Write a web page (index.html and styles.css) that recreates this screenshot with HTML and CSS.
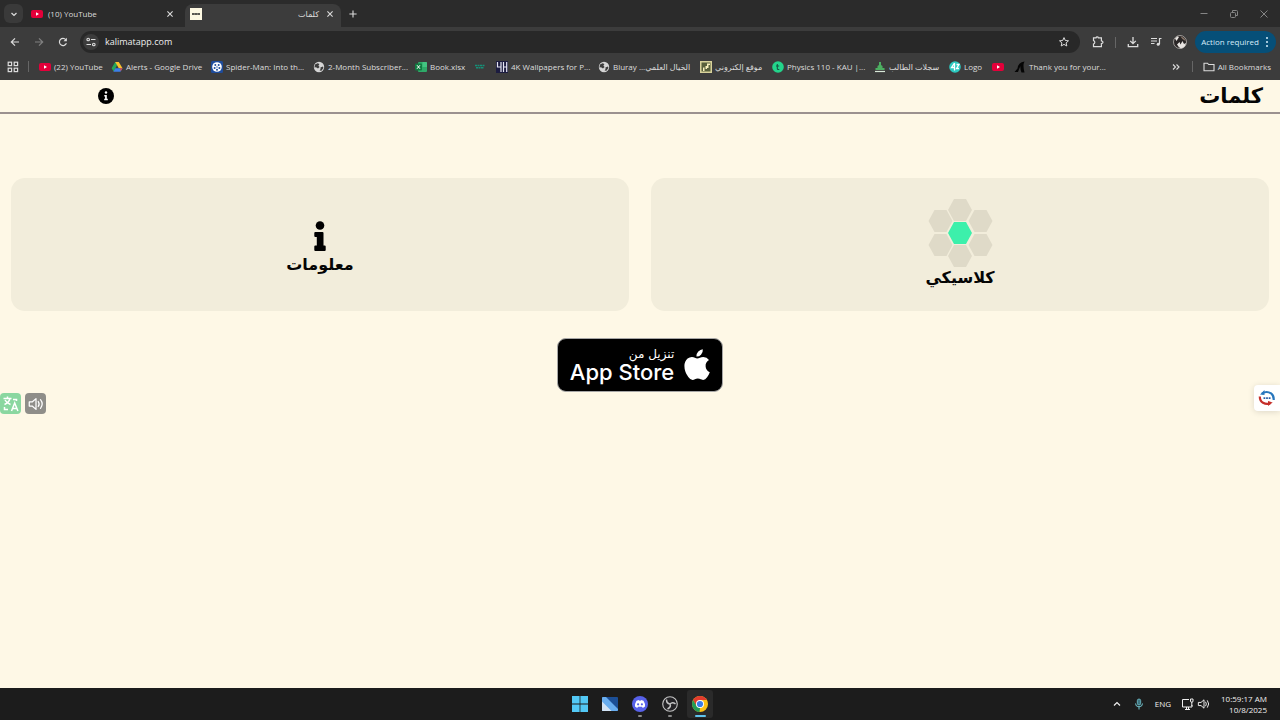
FILE: index.html
```html
<!DOCTYPE html>
<html lang="en">
<head>
<meta charset="utf-8">
<title>كلمات</title>
<link rel="stylesheet" href="styles.css">
</head>
<body>
<svg class="defs" aria-hidden="true">
  <defs>
    <symbol id="yt" viewBox="0 0 12 12"><rect x="0" y="2" width="12" height="8" rx="2" fill="#e4003a"/><path d="M5 4.2 8 6 5 7.8z" fill="#fff"/></symbol>
    <symbol id="globe" viewBox="0 0 12 12"><circle cx="6" cy="6" r="5.2" fill="#d5d5d5"/><path d="M2 3.6 4.6 2.2 6.4 3 5.4 4.8 6.6 6 5 7.4 3 6.2 1.4 6.4zM7.4 6.6 10 5.6 10.4 7 8.4 9.8 6.6 9.4 7.6 8z" fill="#3c3c3c"/></symbol>
    <symbol id="x" viewBox="0 0 12 12"><path d="M3.4 3.4 8.6 8.6M8.6 3.4 3.4 8.6" fill="none" stroke="currentColor" stroke-width="1.1"/></symbol>
    <symbol id="speaker" viewBox="0 0 16 16"><path d="M2 6.2h2.6L8 3.2v9.6L4.600 9.800H2zM10 5.800q1.600 2.200 0 4.400M12 4.200q3 3.800 0 7.600" fill="none" stroke="currentColor" stroke-width="1.100" stroke-linejoin="round" stroke-linecap="round"/></symbol>
  </defs>
</svg>

<header class="browser">
  <div class="tabstrip">
    <button class="tab-search" aria-label="Search tabs"><svg viewBox="0 0 12 12" class="i12"><path d="M3.500 5 6 7.400 8.500 5" fill="none" stroke="currentColor" stroke-width="1.300"/></svg></button>
    <div class="tab">
      <svg class="i12"><use href="#yt"/></svg><span class="tab-title">(10) YouTube</span>
      <button class="plain" aria-label="Close tab"><svg class="i12"><use href="#x"/></svg></button>
    </div>
    <div class="tab active">
      <svg class="i12" viewBox="0 0 12 12"><rect width="12" height="12" fill="#fdf8e2"/><path d="M2 6h8" stroke="#222" stroke-width="1.500" stroke-dasharray="2.600 .2"/></svg>
      <span class="tab-title rtl">كلمات</span>
      <button class="plain" aria-label="Close tab"><svg class="i12"><use href="#x"/></svg></button>
    </div>
    <button class="plain new-tab" aria-label="New tab"><svg class="i12" viewBox="0 0 12 12"><path d="M6 2.400v7.200M2.400 6h7.200" stroke="currentColor" stroke-width="1.100"/></svg></button>
    <div class="window-buttons">
      <button class="plain" aria-label="Minimize"><svg class="i12" viewBox="0 0 12 12"><path d="M2.500 5.500h7" stroke="currentColor"/></svg></button>
      <button class="plain" aria-label="Restore"><svg class="i12" viewBox="0 0 12 12"><g fill="none" stroke="currentColor"><rect x="2.500" y="4.500" width="5" height="5" rx="1"/><path d="M4.500 4V2.500h4q1 0 1 1v4H8"/></g></svg></button>
      <button class="plain" aria-label="Close"><svg class="i12" viewBox="0 0 12 12"><path d="M2.500 2.500l7 7M9.500 2.500l-7 7" stroke="currentColor"/></svg></button>
    </div>
  </div>

  <div class="toolbar">
    <button class="plain" aria-label="Back"><svg class="i12" viewBox="0 0 12 12"><path d="M10 6H2.500M6 2.300 2.300 6 6 9.700" fill="none" stroke="currentColor" stroke-width="1.200"/></svg></button>
    <button class="plain dim" aria-label="Forward"><svg class="i12" viewBox="0 0 12 12"><path d="M2 6h7.500M6 2.300 9.700 6 6 9.700" fill="none" stroke="currentColor" stroke-width="1.200"/></svg></button>
    <button class="plain" aria-label="Reload"><svg class="i12" viewBox="0 0 12 12"><path d="M9.400 7.200A3.600 3.600 0 1 1 8.800 3.600" fill="none" stroke="currentColor" stroke-width="1.200"/><path d="M9.900 1.800v3.400H6.500z" fill="currentColor"/></svg></button>
    <div class="omnibox">
      <button class="site-info" aria-label="Site information"><svg class="i12" viewBox="0 0 12 12"><g fill="none" stroke="currentColor" stroke-width="1.100"><circle cx="3.200" cy="3.500" r="1.300"/><path d="M6 3.500h4.500M1.500 8.500H6"/><circle cx="8.800" cy="8.500" r="1.300"/></g></svg></button>
      <input class="url" type="text" aria-label="Address" value="kalimatapp.com">
      <button class="plain" aria-label="Bookmark this page"><svg class="i12" viewBox="0 0 12 12"><path d="M6 1.600 7.300 4.500l3.200.3L8.100 6.900l.7 3.100L6 8.400 3.200 10l.7-3.100L1.500 4.800l3.200-.3z" fill="none" stroke="currentColor"/></svg></button>
    </div>
    <div class="tools">
      <button class="plain" aria-label="Extensions"><svg class="i12" viewBox="0 0 12 12"><path d="M1.500 1.800h2.500q.2-1 1.200-1t1.200 1h3v3q1.600.2 1.600 1.400T9.400 7.600v3H1.500V8q1.300-.3 1.300-1.700T1.500 4.600z" fill="none" stroke="currentColor" stroke-width="1.200"/></svg></button>
      <span class="sep"></span>
      <button class="plain" aria-label="Downloads"><svg class="i12" viewBox="0 0 12 12"><path d="M6 1v6.500M3.200 4.900 6 7.700l2.800-2.800M1.300 8v2.700h9.400V8" fill="none" stroke="currentColor" stroke-width="1.300"/></svg></button>
      <button class="plain" aria-label="Media controls"><svg class="i12" viewBox="0 0 12 12"><path d="M1 2.500h6M1 5h6M1 7.500h3.500M11.500 2.500h-2v5.500" fill="none" stroke="currentColor" stroke-width="1.200"/><circle cx="8.200" cy="8.200" r="1.500" fill="currentColor"/></svg></button>
      <button class="plain" aria-label="Profile"><svg class="i14" viewBox="0 0 14 14"><circle cx="7" cy="7" r="6.500" fill="#2a2626" stroke="#bdb8b4" stroke-width=".8"/><path d="M2 3.500 4.500 1.200 6 2 3.500 6zM4 9.500 6.500 7l1 2.500L9.500 6l1.500 3 2-1q-.5 4.500-5 5.500-2.500-1-4-4z" fill="#e8e5e2"/><path d="M7.500 1.500q4 .5 5 4.500L9.500 4z" fill="#8d7a6c"/></svg></button>
    </div>
    <button class="action">Action required <svg class="dots" viewBox="0 0 4 12"><g fill="currentColor"><circle cx="2" cy="2" r="1"/><circle cx="2" cy="6" r="1"/><circle cx="2" cy="10" r="1"/></g></svg></button>
  </div>

  <nav class="bookmarks" aria-label="Bookmarks">
    <button class="plain" aria-label="Apps"><svg class="i12" viewBox="0 0 12 12"><g fill="none" stroke="currentColor" stroke-width="1.200"><rect x="1.200" y="1.200" width="3.400" height="3.400"/><rect x="7.200" y="1.200" width="3.400" height="3.400"/><rect x="1.200" y="7.200" width="3.400" height="3.400"/><rect x="7.200" y="7.200" width="3.400" height="3.400"/></g></svg></button>
    <span class="sep first"></span>
    <a href="#" class="bm"><svg class="i12"><use href="#yt"/></svg><span class="l47">(22) YouTube</span></a>
    <a href="#" class="bm"><svg class="i12" viewBox="0 0 12 12"><path d="M4.200 1h3.600L6 4.200 2.700 10.500.6 7.200z" fill="#25a65a"/><path d="M4.200 1h3.600l3.700 6.300H7.800z" fill="#fbc02d"/><path d="M4.300 7.300h7.200l-2 3.400H2.400z" fill="#3c7fe8"/><path d="M9 7.300h2.500l-1.800 3z" fill="#e5483a"/></svg><span class="l75">Alerts - Google Drive</span></a>
    <a href="#" class="bm"><svg class="i12" viewBox="0 0 12 12"><rect width="12" height="12" rx="1.500" fill="#1e4c9c"/><circle cx="6" cy="6" r="4.800" fill="#fff"/><circle cx="4.300" cy="4" r="1" fill="#1e4c9c"/><circle cx="7.700" cy="4" r="1" fill="#1e4c9c"/><circle cx="3.600" cy="7" r="1" fill="#1e4c9c"/><circle cx="8.400" cy="7" r="1" fill="#1e4c9c"/><circle cx="6" cy="8.700" r="1" fill="#1e4c9c"/><circle cx="6" cy="6" r=".7" fill="#1e4c9c"/></svg><span class="l77">Spider-Man: Into th...</span></a>
    <a href="#" class="bm"><svg class="i12"><use href="#globe"/></svg><span class="l77">2-Month Subscriber...</span></a>
    <a href="#" class="bm"><svg class="i12" viewBox="0 0 12 12"><rect x="3" y="1" width="9" height="10" rx="1" fill="#2faa69"/><path d="M7.500 1H11q1 0 1 1v4H7.500z" fill="#43c481"/><rect y="2.500" width="7" height="7" rx="1" fill="#107c41"/><path d="M2 4.200 5 7.800M5 4.200 2 7.800" stroke="#fff"/></svg><span class="l34">Book.xlsx</span></a>
    <a href="#" class="bm" aria-label="Bookmark"><svg class="i12" viewBox="0 0 12 12"><path d="M1 4.500h10M2 6.800h8" stroke="#159077" stroke-width="1.500" stroke-dasharray="2 .5"/></svg></a>
    <a href="#" class="bm"><svg class="i12" viewBox="0 0 12 12"><rect width="12" height="12" fill="#1c1c40"/><path d="M1.500 1v5h3.500M5 1v10M7.500 1v10M10.700 1v10M7.500 6h3" fill="none" stroke="#e4e4f2" stroke-width="1.200"/></svg><span class="l77">4K Wallpapers for P...</span></a>
    <a href="#" class="bm"><svg class="i12"><use href="#globe"/></svg><span class="l77" dir="ltr">Bluray ...الخيال العلمي</span></a>
    <a href="#" class="bm"><svg class="i12" viewBox="0 0 12 12"><rect width="12" height="12" fill="#d8d29a"/><path d="M1.500 1.500h9v9h-9z" fill="#59603b"/><path d="M3 10V6.500h1.500V10zM5.500 8V5H7v3zM7 4.500V2.500h3V4H8.500v3H7z" fill="#f7efbb"/></svg><span class="l47">موقع إلكتروني</span></a>
    <a href="#" class="bm"><svg class="i12" viewBox="0 0 12 12"><circle cx="6" cy="6" r="5.800" fill="#23d48b"/><path d="M5.300 3v4.500q0 1 1 1h1M4 5h3.200" fill="none" stroke="#145744" stroke-width="1.100"/></svg><span class="l77">Physics 110 - KAU |...</span></a>
    <a href="#" class="bm"><svg class="i12" viewBox="0 0 12 12"><path d="M5 1h2v3l1.500 1v2h2v2h-9V7h2V5L5 4z" fill="#4caf61"/><path d="M1 10.500h10" stroke="#d8e8d8" stroke-width="1.200"/></svg><span class="l50">سجلات الطالب</span></a>
    <a href="#" class="bm"><svg class="i12" viewBox="0 0 12 12"><circle cx="6" cy="6" r="5.800" fill="#2cc9c0"/><path d="M5.500 2 2.500 6.500h3.500M5.500 2v7.500M7.500 3.500h2.500L7.500 7.500H10" fill="none" stroke="#fff" stroke-width="1.300"/></svg><span class="l18">Logo</span></a>
    <a href="#" class="bm" aria-label="YouTube"><svg class="i12"><use href="#yt"/></svg></a>
    <a href="#" class="bm"><svg class="i12" viewBox="0 0 12 12"><path d="M.5 11 3.500 7.500Q4 1.500 10.500.5 8.500 4 10.500 11.500H7.500Q6 8 6.500 5 5 8 4 11z" fill="#050505"/></svg><span class="l75">Thank you for your...</span></a>
    <div class="bm-end">
      <button class="plain" aria-label="More bookmarks"><svg class="i12" viewBox="0 0 12 12"><path d="M3 3.500 5.500 6 3 8.500M6.500 3.500 9 6 6.500 8.500" fill="none" stroke="currentColor" stroke-width="1.100"/></svg></button>
      <span class="sep"></span>
      <a href="#" class="bm"><svg class="i12" viewBox="0 0 12 12"><path d="M1 2.200h3.500l1.200 1.300H11v6.300H1z" fill="none" stroke="currentColor" stroke-width="1.100"/></svg><span>All Bookmarks</span></a>
    </div>
  </nav>
</header>

<main class="site" dir="rtl" lang="ar">
  <header class="site-head">
    <h1 class="brand">كلمات</h1>
    <button class="plain info-btn" aria-label="معلومات"><svg class="i16" viewBox="0 0 16 16"><circle cx="8" cy="8" r="8" fill="#000"/><circle cx="8" cy="4.500" r="1.200" fill="#fff"/><path d="M6.300 7h2.500v3.700h1v1.500H6.200v-1.500h.9V8.400h-.8z" fill="#fff"/></svg></button>
  </header>
  <div class="cards">
    <a href="#" class="card">
      <svg class="hexes" viewBox="0 0 66 66"><defs><path id="hex" d="M-12 0-6-11H6L12 0 6 11H-6z"/></defs>
        <g fill="#dfdac8"><use href="#hex" x="33" y="10"/><use href="#hex" x="13.500" y="21"/><use href="#hex" x="53.500" y="21"/><use href="#hex" x="13.500" y="45"/><use href="#hex" x="53.500" y="45"/><use href="#hex" x="33" y="56"/></g>
        <use href="#hex" x="33" y="33" fill="#3cf0ab"/></svg>
      <span>كلاسيكي</span>
    </a>
    <a href="#" class="card">
      <svg class="big-i" viewBox="0 0 12 30"><circle cx="6" cy="4.500" r="4.300"/><path d="M1.300 11h7.200q1 0 1 1v12.500h1.200q1 0 1 1V29q0 1-1 1H1.300q-1 0-1-1v-3.500q0-1 1-1h1.500v-8.500H1.300q-1 0-1-1v-3q0-1 1-1z"/></svg>
      <span>معلومات</span>
    </a>
  </div>
  <a href="#" class="store">
    <svg class="apple" viewBox="0 0 26 32"><path d="M18.800.3Q19.200 3.300 17 5.700 15 7.800 12.400 7.600 12.200 4.700 14.300 2.500 16.300.5 18.800.3zM13.200 9.500C15 9.500 16.600 8 19.300 8q3.600.1 5.700 3-3.700 2.300-3.400 6.200.2 4 4.200 6-1 2.800-2.700 5-1.700 2.600-4 2.700c-2 0-2.700-1.300-5.300-1.300S10.500 31 8.600 31q-2.400-.1-4.300-2.900Q.4 22.600.4 17 .5 12 3.600 9.500 5.600 8 7.900 8c2.300 0 3.900 1.500 5.300 1.500z"/></svg>
    <span class="store-text"><span class="store-top">تنزيل من</span><span class="store-name" dir="ltr">App Store</span></span>
  </a>
  <div class="float-left" dir="ltr">
    <button class="float green" aria-label="Translate"><svg class="i18" viewBox="0 0 18 18"><g fill="none" stroke="#fff" stroke-width="1.500"><path d="M1.500 3.500h8M5.500 1.500v2M2.500 9.500Q7 7.500 8 3.500M3 5q1.500 3 5.500 4.500M9.500 16l3.200-8 3.200 8M10.600 13.500h4.200M11 4.500h3.500V6M2.500 12v2.500H6"/></g></svg></button>
    <button class="float grey" aria-label="Read aloud"><svg class="i18"><use href="#speaker"/></svg></button>
  </div>
  <button class="float-right" aria-label="Assistant"><svg class="i18" viewBox="0 0 18 18"><g fill="none" stroke-width="2.200"><path d="M4 4.600Q8.500 1.500 13 4.400 16 6.500 15.700 11" stroke="#2877bd"/><path d="M1.800 7.500Q1.800 12 5 13.800q3.500 2 7 .6" stroke="#c52f2a"/></g><path d="M2 5.500 6.500 1v5z" fill="#2877bd"/><path d="M14.700 13.500 10 12v5z" fill="#c52f2a"/><path d="M5.500 9.200h7" stroke="#2b60a8" stroke-width="1.800" stroke-dasharray="1.800 .8"/></svg></button>
</main>

<footer class="taskbar">
  <div></div>
  <div class="apps">
    <button class="task" aria-label="Start"><svg class="i16" viewBox="0 0 16 16"><path d="M0 0h7.600v7.600H0zM8.400 0H16v7.600H8.400zM0 8.400h7.600V16H0zM8.400 8.400H16V16H8.400z" fill="#52c8f5"/></svg></button>
    <button class="task" aria-label="Desktop"><svg class="i16" viewBox="0 0 16 16"><rect y="1" width="16" height="14" rx="1" fill="#1c4f96"/><path d="M0 2q0-1 1-1h3l12 12v1q0 1-1 1H0z" fill="#69aef0"/><path d="M0 5.500 9.500 15H1q-1 0-1-1z" fill="#d3e4f5"/></svg></button>
    <button class="task running" aria-label="Discord"><svg class="i16" viewBox="0 0 16 16"><circle cx="8" cy="8" r="8" fill="#5761e9"/><path d="M4.500 4.700 7 4l.4.700h1.200L9 4l2.500.7q1.900 2.800 1.500 5.800L10.800 12l-.8-1.200H6L5.200 12 3 10.500q-.3-3 1.500-5.800z" fill="#fff"/><circle cx="6.100" cy="8.300" r="1.100" fill="#5761e9"/><circle cx="9.900" cy="8.300" r="1.100" fill="#5761e9"/></svg></button>
    <button class="task running" aria-label="OBS Studio"><svg class="i16" viewBox="0 0 16 16"><circle cx="8" cy="8" r="7.300" fill="#242326" stroke="#c4c4c4" stroke-width="1.100"/><path d="M8 8Q4.500 7.500 4.500 3.500M8 8q2.500-2.500 5.500 0M8 8q1.500 3-2.500 5" fill="none" stroke="#c4c4c4" stroke-width="1.500"/></svg></button>
    <button class="task current" aria-label="Chrome"><svg class="i16" viewBox="0 0 16 16"><circle cx="8" cy="8" r="8" fill="#fbc116"/><path d="M1.100 4A8 8 0 0 1 14.900 4H8L4.500 10z" fill="#e33b2e"/><path d="M1.100 4 4.600 10 8 12 7.500 16A8 8 0 0 1 1.100 4z" fill="#239b56"/><circle cx="8" cy="8" r="4" fill="#fff"/><circle cx="8" cy="8" r="3.100" fill="#3b7de8"/></svg></button>
  </div>
  <div class="tray">
    <button class="plain" aria-label="Hidden icons"><svg class="i12" viewBox="0 0 12 12"><path d="M3 7.500l3-3 3 3" fill="none" stroke="currentColor" stroke-width="1.200"/></svg></button>
    <button class="plain mic" aria-label="Microphone"><svg class="i12" viewBox="0 0 12 12"><rect x="4.300" y="1" width="3.400" height="6" rx="1.700" fill="#3e7480" stroke="#72c4cf" stroke-width=".8"/><path d="M2.500 5.500q0 3.300 3.500 3.300t3.500-3.300M6 9v2.500" fill="none" stroke="#72c4cf"/></svg></button>
    <span class="lang">ENG</span>
    <button class="plain net" aria-label="Network and volume"><svg class="i14" viewBox="0 0 14 14"><path d="M8 2.500H1.500V10H11V8M4 12.500h5M5.500 10v2.500M7.500 10v2.500M9.500 2v2q0 1.200 1.300 1.200T12 4V2zM10.800 5v4" fill="none" stroke="currentColor"/></svg><svg class="i14"><use href="#speaker"/></svg></button>
    <time class="clock">10:59:17 AM<br>10/8/2025</time>
  </div>
</footer>
</body>
</html>
```
FILE: styles.css
```css
* { box-sizing: border-box; }

body {
  margin: 0;
  min-height: 100vh;
  display: flex;
  flex-direction: column;
  font-family: "Open Sans", "DejaVu Sans", sans-serif;
  font-size: 8px;
  line-height: 12px;
  color: #dcdcdc;
  background: #fef8e6;
}

button, input { font: inherit; color: inherit; }
button { padding: 0; border: 0; background: none; display: flex; align-items: center; }
a { color: inherit; text-decoration: none; }
svg { display: block; flex: none; }

.defs { position: absolute; width: 0; height: 0; }
.i12 { width: 12px; height: 12px; }
.i14 { width: 14px; height: 14px; }
.i16 { width: 16px; height: 16px; }
.i18 { width: 18px; height: 18px; }
.dim { color: #808080; }

/* Browser window */
.browser { background: #3c3c3c; }

.tabstrip {
  display: flex;
  align-items: stretch;
  height: 27px;
  padding: 4px 10px 0 4px;
  background: #2b2b2b;
}
.tab-search {
  width: 19px;
  height: 19px;
  justify-content: center;
  border-radius: 6px;
  background: #3a3a3a;
}
.tab {
  display: flex;
  align-items: center;
  gap: 5px;
  width: 162px;
  height: 23px;
  padding: 0 9px 4px 8px;
}
.tab.active {
  width: 156px;
  padding: 0 5px 4px;
  border-radius: 8px 8px 0 0;
  background: #3c3c3c;
}
.tab-title { flex: 1; }
.tab-title.rtl { direction: rtl; }
.new-tab { margin-left: 6px; padding-bottom: 4px; }
.window-buttons {
  display: flex;
  gap: 18px;
  margin-left: auto;
  padding-bottom: 4px;
  color: #858585;
}

.toolbar {
  display: flex;
  align-items: center;
  gap: 12px;
  height: 30px;
  padding: 0 4px 0 9px;
}
.omnibox {
  flex: 1;
  display: flex;
  align-items: center;
  gap: 6px;
  height: 22px;
  margin-left: -1px;
  padding: 0 10px 0 3px;
  border-radius: 11px;
  background: #282828;
}
.site-info {
  width: 16px;
  height: 16px;
  justify-content: center;
  border-radius: 8px;
  background: #3c3c3c;
}
.url {
  flex: 1;
  min-width: 0;
  padding: 0;
  border: 0;
  outline: 0;
  background: none;
  font-size: 9px;
  color: #eee;
}
.tools { display: flex; align-items: center; gap: 11px; }
.sep { width: 1px; height: 11px; background: #666; }
.action {
  gap: 6px;
  height: 22px;
  margin-left: -4px;
  padding: 0 7px 0 6px;
  border-radius: 11px;
  background: #064f78;
  color: #d6ecfa;
  white-space: nowrap;
}
.dots { width: 4px; height: 12px; }

.bookmarks {
  display: flex;
  align-items: center;
  gap: 10px;
  height: 23px;
  padding: 0 9px 4px 7px;
  white-space: nowrap;
}
.sep.first { margin-left: -1px; }
.bm { display: flex; align-items: center; gap: 3px; }
.l18 { width: 18px; }
.l34 { width: 34px; }
.l47 { width: 47px; }
.l50 { width: 50px; }
.l75 { width: 75px; }
.l77 { width: 77px; }
.bm-end { display: flex; align-items: center; gap: 10px; margin-left: auto; }

/* Web page */
.site {
  position: relative;
  flex: 1;
  display: flex;
  flex-direction: column;
  align-items: center;
  color: #050505;
}
.site-head {
  align-self: stretch;
  display: flex;
  align-items: center;
  justify-content: space-between;
  height: 34px;
  padding: 0 17px 0 98px;
  border-bottom: 2px solid #9b918f;
}
.brand { margin: 0; font: bold 21px/28px "DejaVu Sans", sans-serif; }
.cards {
  align-self: stretch;
  display: grid;
  grid-template-columns: 1fr 1fr;
  gap: 22px;
  padding: 64px 11px 0;
}
.card {
  display: flex;
  flex-direction: column;
  align-items: center;
  justify-content: center;
  min-height: 133px;
  border-radius: 14px;
  background: #f2eddb;
  font: bold 16px/24px "DejaVu Sans", sans-serif;
}
.hexes { width: 66px; height: 66px; overflow: visible; }
.big-i { width: 12px; height: 30px; margin: 8px 0 2px; }

.store {
  display: flex;
  align-items: center;
  gap: 10px;
  height: 54px;
  margin-top: 27px;
  padding: 0 12px;
  border: 1px solid #a6a6a6;
  border-radius: 9px;
  background: #000;
  color: #fff;
}
.apple { width: 26px; height: 32px; fill: #fff; }
.store-text { display: flex; flex-direction: column; }
.store-top { font: 12px/14px "DejaVu Sans", sans-serif; }
.store-name { font: 500 22px/22px Inter, sans-serif; }

.float-left {
  position: absolute;
  left: 0;
  top: 313px;
  display: flex;
  gap: 4px;
}
.float { width: 21px; height: 21px; justify-content: center; border-radius: 4px; }
.green { background: #8ad7a0; }
.grey { background: #8f8e89; color: #fff; }
.float-right {
  position: absolute;
  right: 0;
  top: 305px;
  width: 26px;
  height: 26px;
  justify-content: center;
  border-radius: 4px 0 0 4px;
  background: #fff;
  box-shadow: 0 1px 6px #0002;
}

/* Desktop taskbar */
.taskbar {
  display: grid;
  grid-template-columns: 1fr auto 1fr;
  align-items: center;
  height: 32px;
  background: #1c1c1c;
  color: #f0f0f0;
}
.apps { display: flex; gap: 4px; }
.task {
  position: relative;
  width: 26px;
  height: 28px;
  justify-content: center;
  border-radius: 3px;
}
.current { background: #2a2a2a; }
.running::after, .current::after {
  content: "";
  position: absolute;
  bottom: 1px;
  width: 4px;
  height: 2px;
  border-radius: 1px;
  background: #8a8a8a;
}
.current::after { width: 11px; background: #5fc3ee; }
.tray {
  display: flex;
  align-items: center;
  justify-content: flex-end;
  gap: 10px;
  padding-right: 13px;
}
.net { gap: 2px; }
.clock { text-align: right; line-height: 11px; }
```
